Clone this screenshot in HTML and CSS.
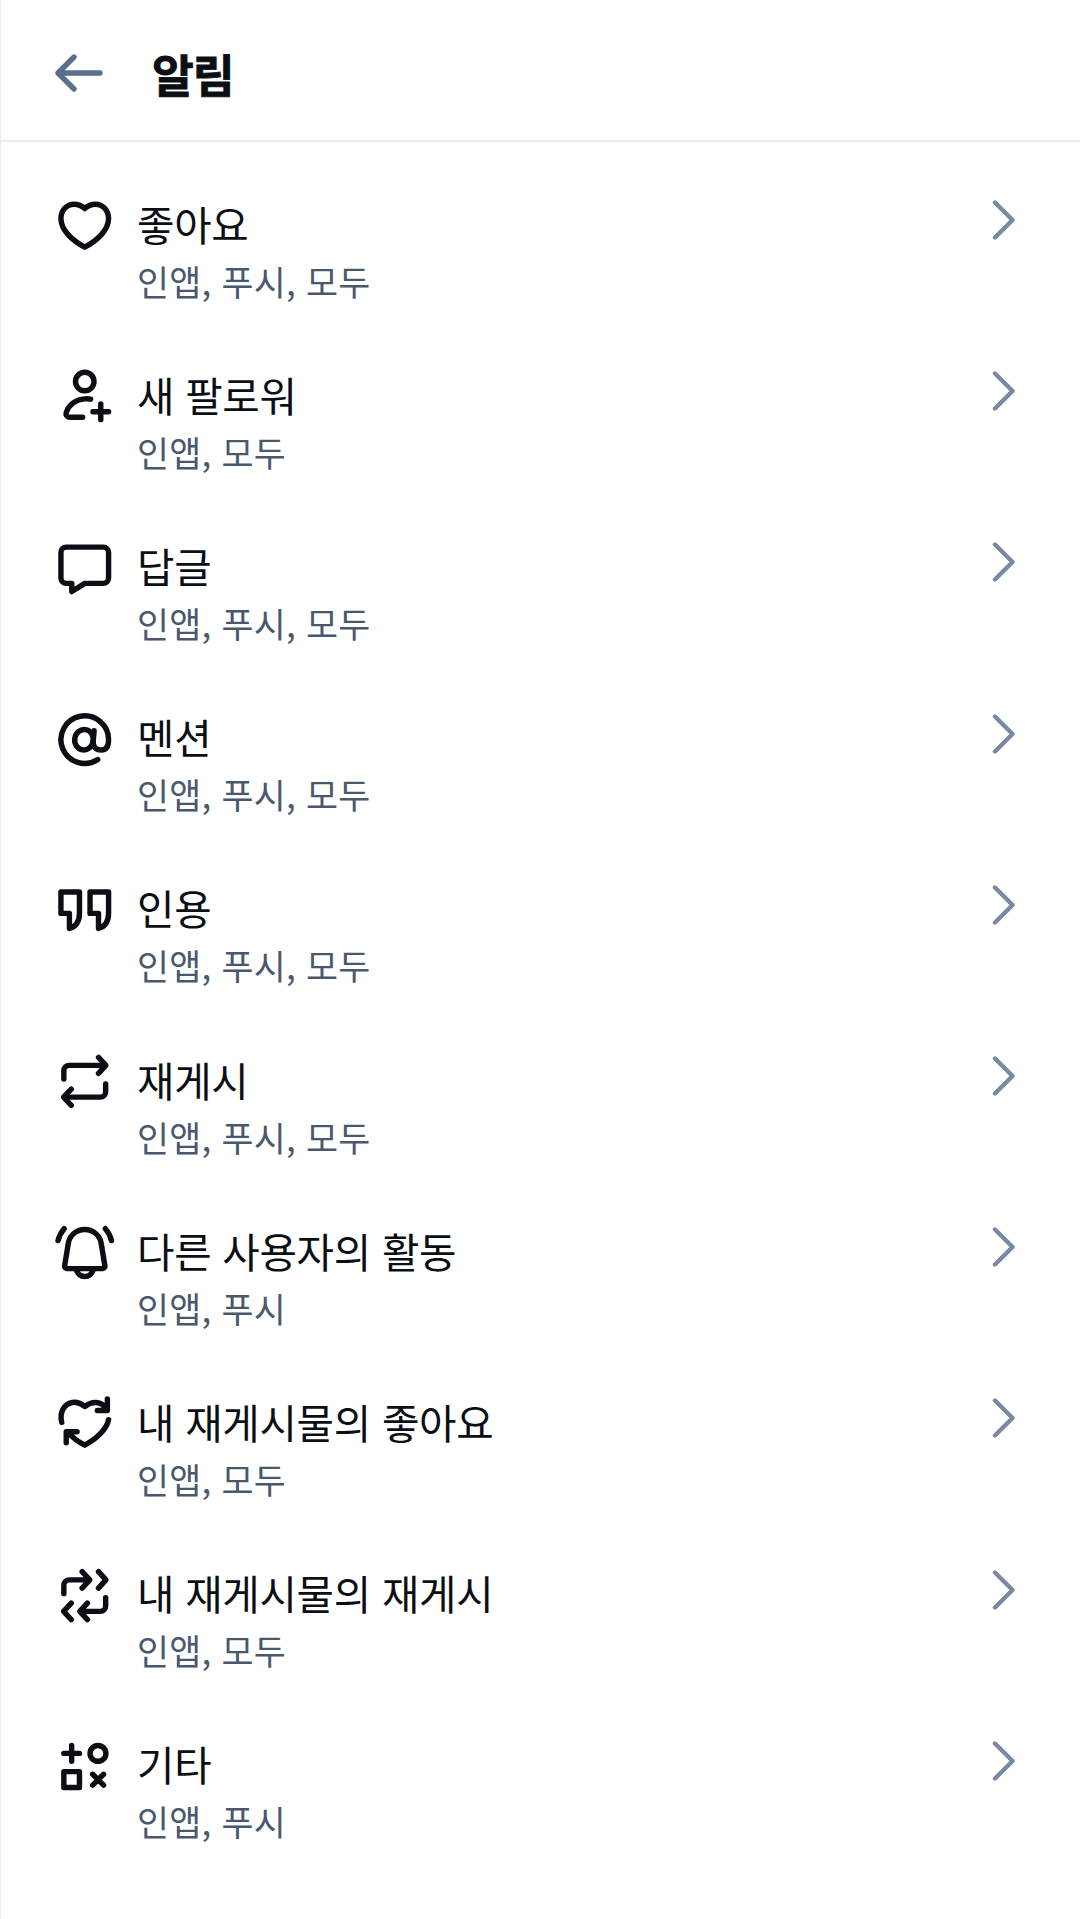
FILE: index.html
```html
<!DOCTYPE html>
<html lang="ko">
<head>
    <meta charset="UTF-8">
    <title>알림</title>
    <link rel="stylesheet" href="styles.css">
</head>
<body>
<div id="container">
    <div class="header">
        <svg class="back" viewBox="0 0 52 40"><path d="M47 20H5M21 4L5 20l16 16"/></svg>
        <h1>알림</h1>
    </div>
    <ul class="list">
        <li>
            <svg class="icon" viewBox="0 0 24 24"><path d="M12 5.500C10.800 4.400 9.500 3.850 8 3.850 5.100 3.850 3 6.300 3 9.300c0 4.300 4.200 8.300 9 10.800 4.800-2.500 9-6.500 9-10.800 0-3-2.100-5.450-5-5.450-1.500 0-2.800.55-4 1.650Z"/></svg>
            <div class="text"><h2>좋아요</h2><p>인앱, 푸시, 모두</p></div>
            <svg class="arrow" viewBox="0 0 24 40"><path d="M3 2.500L20.500 20 3 37.500"/></svg>
        </li>
        <li>
            <svg class="icon" viewBox="0 0 24 24"><circle cx="12" cy="6.250" r="3.500"/><path d="M14.200 12.900C13.500 12.750 12.700 12.750 12 12.800 8.700 13 6 15 5 17.900c-.3 1 .3 1.850 1.300 1.850h4.900M18.050 14.750v5.900M15.100 17.700H21"/></svg>
            <div class="text"><h2>새 팔로워</h2><p>인앱, 모두</p></div>
            <svg class="arrow" viewBox="0 0 24 40"><path d="M3 2.500L20.500 20 3 37.500"/></svg>
        </li>
        <li>
            <svg class="icon" viewBox="0 0 24 24"><path d="M5 4.200h14a2 2 0 0 1 2 2v9.700a2 2 0 0 1-2 2h-7L7.100 21v-3.100H5a2 2 0 0 1-2-2V6.200a2 2 0 0 1 2-2Z"/></svg>
            <div class="text"><h2>답글</h2><p>인앱, 푸시, 모두</p></div>
            <svg class="arrow" viewBox="0 0 24 40"><path d="M3 2.500L20.500 20 3 37.500"/></svg>
        </li>
        <li>
            <svg class="icon" viewBox="0 0 24 24"><path d="M16.900 19.500A9 9 0 1 1 21 12c0 2.500-.9 3.900-2.800 3.900-2.100 0-3.200-1.400-3-3.500l.35-3.800"/><ellipse cx="11.700" cy="12" rx="3.500" ry="3.850" transform="rotate(8 11.700 12)"/></svg>
            <div class="text"><h2>멘션</h2><p>인앱, 푸시, 모두</p></div>
            <svg class="arrow" viewBox="0 0 24 40"><path d="M3 2.500L20.500 20 3 37.500"/></svg>
        </li>
        <li>
            <svg class="icon" viewBox="0 0 24 24"><path d="M3 4.900h7v8c0 3-1.300 5-3.800 5.800V13H3ZM14 4.900h7v8c0 3-1.300 5-3.800 5.800V13H14Z"/></svg>
            <div class="text"><h2>인용</h2><p>인앱, 푸시, 모두</p></div>
            <svg class="arrow" viewBox="0 0 24 40"><path d="M3 2.500L20.500 20 3 37.500"/></svg>
        </li>
        <li>
            <svg class="icon" viewBox="0 0 24 24"><path d="M4.100 11V7.800a2 2 0 0 1 2-2H19.800M17.200 2.800l2.800 3-2.800 3M19.900 12.800v3a2 2 0 0 1-2 2H4.200M6.900 14.800l-2.900 3 2.900 3.100"/></svg>
            <div class="text"><h2>재게시</h2><p>인앱, 푸시, 모두</p></div>
            <svg class="arrow" viewBox="0 0 24 40"><path d="M3 2.500L20.500 20 3 37.500"/></svg>
        </li>
        <li>
            <svg class="icon" viewBox="0 0 24 24"><path d="M12 3.200c-3.400 0-6 2.500-6.300 5.800L4.400 16.900c-.1.600.3 1.100 1 1.100h13.200c.7 0 1.100-.5 1-1.100L18.300 9C18 5.700 15.400 3.200 12 3.200ZM8.700 18.300c.6 1.700 1.800 2.700 3.300 2.700s2.700-1 3.300-2.700M4.200 2.900C3.100 4.200 2.300 5.700 1.900 7.400M19.800 2.900c1.100 1.300 1.900 2.800 2.300 4.500"/></svg>
            <div class="text"><h2>다른 사용자의 활동</h2><p>인앱, 푸시</p></div>
            <svg class="arrow" viewBox="0 0 24 40"><path d="M3 2.500L20.500 20 3 37.500"/></svg>
        </li>
        <li>
            <svg class="icon" viewBox="0 0 24 24"><path d="M3.300 11.500C2.400 8 4 4.500 7.300 3.950 9 3.700 10.600 4.300 12 5.500c2.700-2.200 6.300-2.200 8.200 1M20.550 2.600V7h-3.800M21 10.500c-.7 3.500-4.300 7.100-9 9.600-2.500-1.300-4.700-3-6.300-4.800M5 19.200V15h4.100"/></svg>
            <div class="text"><h2>내 재게시물의 좋아요</h2><p>인앱, 모두</p></div>
            <svg class="arrow" viewBox="0 0 24 40"><path d="M3 2.500L20.500 20 3 37.500"/></svg>
        </li>
        <li>
            <svg class="icon" viewBox="0 0 24 24"><path d="M4.100 11.200V8a2 2 0 0 1 2-2h7.500M11 2.900L13.900 6 11 9.100M17.200 2.900L20 6l-2.800 3.100M19.900 12.700v3.200a2 2 0 0 1-2 2h-7.500M13 14.800l-2.900 3.100L13 21M6.900 14.800L4 17.900 6.900 21"/></svg>
            <div class="text"><h2>내 재게시물의 재게시</h2><p>인앱, 모두</p></div>
            <svg class="arrow" viewBox="0 0 24 40"><path d="M3 2.500L20.500 20 3 37.500"/></svg>
        </li>
        <li>
            <svg class="icon" viewBox="0 0 24 24"><path d="M7.050 4v5.900M4.100 6.950H10M4.100 13.850H10v6H4.100ZM15 14.850l4.100 4.100M19.100 14.850L15 18.950"/><circle cx="17" cy="6.950" r="3"/></svg>
            <div class="text"><h2>기타</h2><p>인앱, 푸시</p></div>
            <svg class="arrow" viewBox="0 0 24 40"><path d="M3 2.500L20.500 20 3 37.500"/></svg>
        </li>
    </ul>
</div>
</body>
</html>
```

FILE: styles.css
```css
* {
    margin: 0;
    padding: 0;
    box-sizing: border-box;
}

body {
    background-color: #fff;
    color: #0b0f14;
    font-family: "Noto Sans CJK KR", sans-serif;
}

li {
    list-style: none;
}

svg {
    display: block;
    flex: none;
    fill: none;
    stroke-linecap: round;
    stroke-linejoin: round;
}

#container {
    height: 1919px;
    border-left: 1px solid #ebecf0;
    overflow: hidden;
}

/* header */
.header {
    display: flex;
    align-items: center;
    height: 142px;
    padding: 6px 0 0 52px;
    border-bottom: 2px solid #ebecf0;
}

.back {
    width: 52px;
    height: 40px;
    stroke: #5a6f8a;
    stroke-width: 5.400;
}

.header h1 {
    margin-left: 47px;
    font-size: 45.500px;
    font-weight: 700;
    line-height: 60px;
    letter-spacing: -1px;
    -webkit-text-stroke: .8px #0b0f14;
}

/* list */
.list {
    padding-top: 56px;
}

.list li {
    display: flex;
    align-items: flex-start;
    height: 171.200px;
    padding-left: 51.500px;
    padding-right: 64.500px;
}

.icon {
    width: 63.500px;
    height: 63.500px;
    margin-top: -4px;
    stroke: #0b0f14;
    stroke-width: 2.050;
}

.text {
    flex: 1;
    margin-top: -2.400px;
    margin-left: 21px;
}

.text h2 {
    font-size: 40.700px;
    font-weight: 400;
    line-height: 56px;
    letter-spacing: -.3px;
}

.text p {
    margin-top: 1px;
    color: #49596d;
    font-size: 34.800px;
    line-height: 56px;
    letter-spacing: .25px;
}

.arrow {
    width: 24px;
    height: 40px;
    margin-top: 2px;
    stroke: #788aa3;
    stroke-width: 4.400;
}
```
